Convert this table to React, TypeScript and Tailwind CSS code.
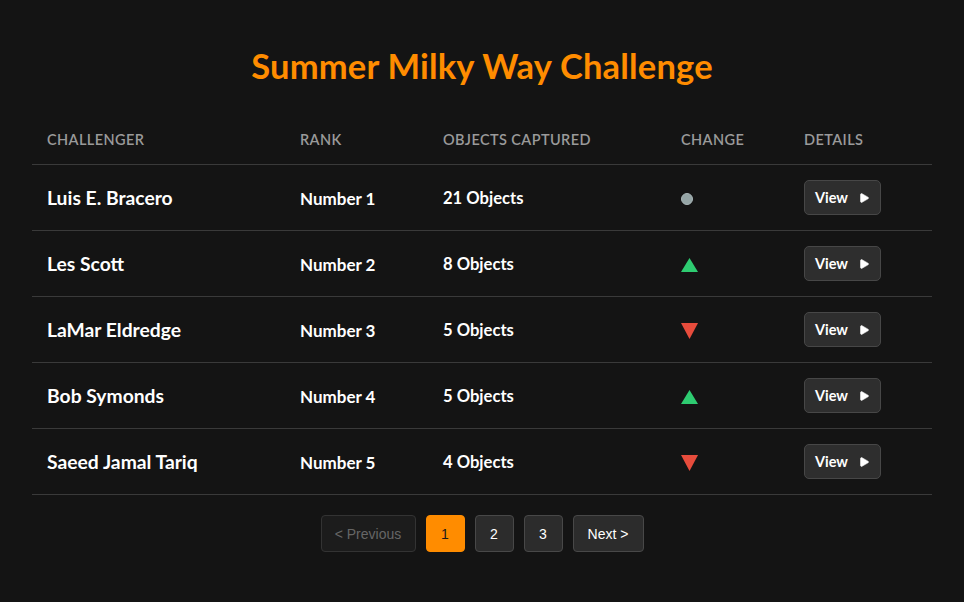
import { Play } from "lucide-react";

type Change = "same" | "up" | "down";

const rows: { name: string; rank: string; objects: string; change: Change }[] = [
  { name: "Luis E. Bracero", rank: "Number 1", objects: "21 Objects", change: "same" },
  { name: "Les Scott", rank: "Number 2", objects: "8 Objects", change: "up" },
  { name: "LaMar Eldredge", rank: "Number 3", objects: "5 Objects", change: "down" },
  { name: "Bob Symonds", rank: "Number 4", objects: "5 Objects", change: "up" },
  { name: "Saeed Jamal Tariq", rank: "Number 5", objects: "4 Objects", change: "down" },
];

const cols = "grid grid-cols-[253px_143px_238px_123px_143px]";

function ChangeIcon({ change }: { change: Change }) {
  if (change === "same") {
    return <span className="block size-3 rounded-full border border-[#a9b6b8] bg-[#95a5a6]" />;
  }
  if (change === "up") {
    return (
      <svg width="17" height="14" viewBox="0 0 17 14" aria-hidden>
        <polygon points="8.5,0 17,14 0,14" fill="#2ecc71" />
      </svg>
    );
  }
  return (
    <svg width="17" height="16" viewBox="0 0 17 16" aria-hidden>
      <polygon points="0,0 17,0 8.5,16" fill="#e74c3c" />
    </svg>
  );
}

function PageButton({
  children,
  active,
  disabled,
  wide,
}: {
  children: React.ReactNode;
  active?: boolean;
  disabled?: boolean;
  wide?: string;
}) {
  const tone = active
    ? "bg-[#ff8c00] border-[#ff8c00] text-[#1a1a1a]"
    : disabled
      ? "bg-[#1c1c1c] border-[#333] text-[#666]"
      : "bg-[#2c2c2c] border-[#484848] text-white";
  return (
    <button
      className={`flex h-[37px] items-center justify-center rounded-[4px] border text-sm ${tone} ${wide ?? "w-[39px]"}`}
    >
      {children}
    </button>
  );
}

export default function App() {
  return (
    <div className="min-h-[602px] bg-[#141414] font-['Lato',sans-serif] text-white">
      <div className="mx-auto w-[900px] pt-[42px]">
        <h1 className="text-center text-[34.5px] font-bold leading-[48px] tracking-[0.2px] text-[#ff8c00]">
          Summer Milky Way Challenge
        </h1>

        <div className="mt-[30px]">
          <div className={`${cols} h-[45px] items-start border-b border-[#3a3a3a] text-[14.5px] font-semibold uppercase tracking-[0.4px] text-[#9a9a9a]`}>
            <div className="pl-[15px] leading-[40px]">Challenger</div>
            <div className="pl-[15px] leading-[40px]">Rank</div>
            <div className="pl-[15px] leading-[40px]">Objects Captured</div>
            <div className="pl-[15px] leading-[40px]">Change</div>
            <div className="pl-[15px] leading-[40px]">Details</div>
          </div>

          {rows.map((r) => (
            <div
              key={r.name}
              className={`${cols} h-[66px] items-center border-b border-[#3a3a3a] font-bold`}
            >
              <div className="pl-[15px] pt-[2px] text-[19.3px]">{r.name}</div>
              <div className="pl-[15px] pt-[2px] text-[17px]">{r.rank}</div>
              <div className="pl-[15px] pt-[2px] text-[16.6px]">{r.objects}</div>
              <div className="flex pl-[15px] pt-[2px]">
                <ChangeIcon change={r.change} />
              </div>
              <div className="pl-[15px]">
                <button className="flex h-[35px] w-[77px] items-center justify-center gap-[10px] rounded-[5px] border border-[#474747] bg-[#2e2e2e] text-[14.5px] font-bold text-white">
                  View
                  <Play className="size-[12px] fill-white" strokeWidth={1} />
                </button>
              </div>
            </div>
          ))}
        </div>

        <div className="mt-[20px] flex justify-center gap-[10px] font-['Liberation_Sans',sans-serif]">
          <PageButton disabled wide="w-[95px]">&lt; Previous</PageButton>
          <PageButton active>1</PageButton>
          <PageButton>2</PageButton>
          <PageButton>3</PageButton>
          <PageButton wide="w-[71px]">Next &gt;</PageButton>
        </div>
      </div>
    </div>
  );
}
